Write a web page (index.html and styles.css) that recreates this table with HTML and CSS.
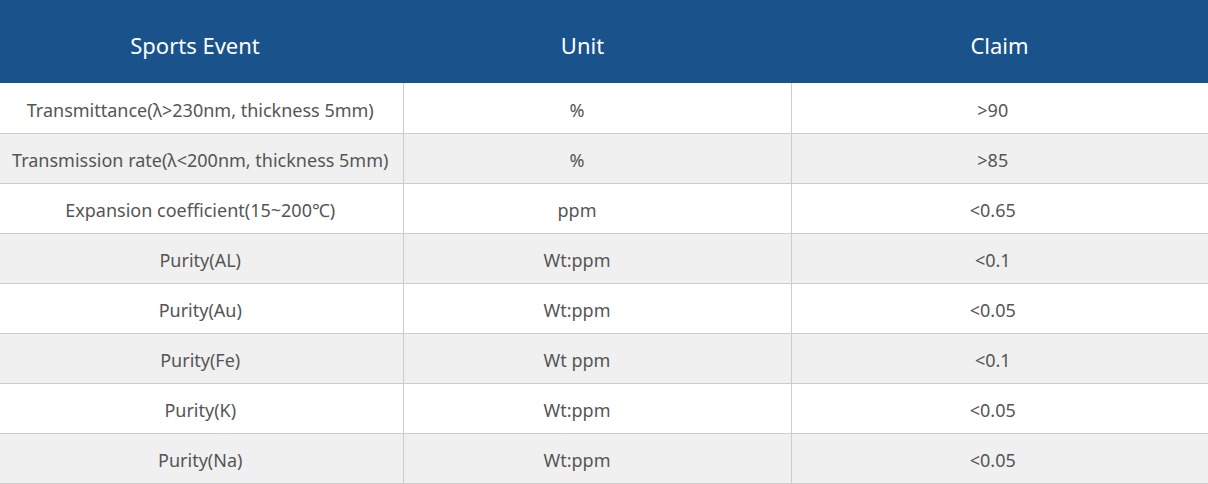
FILE: index.html
```html
<!DOCTYPE html>
<html lang="en">
<head>
<meta charset="utf-8">
<title>Specs</title>
<link rel="stylesheet" href="styles.css">
</head>
<body>
<table class="spec">
  <colgroup>
    <col class="c1"><col class="c2"><col class="c3">
  </colgroup>
  <thead>
    <tr><th class="h1">Sports Event</th><th class="h2">Unit</th><th class="h3">Claim</th></tr>
  </thead>
  <tbody>
    <tr class="first"><td>Transmittance(λ&gt;230nm, thickness 5mm)</td><td>%</td><td>&gt;90</td></tr>
    <tr><td>Transmission rate(λ&lt;200nm, thickness 5mm)</td><td>%</td><td>&gt;85</td></tr>
    <tr><td>Expansion coefficient(15~200℃)</td><td>ppm</td><td>&lt;0.65</td></tr>
    <tr><td>Purity(AL)</td><td>Wt:ppm</td><td>&lt;0.1</td></tr>
    <tr><td>Purity(Au)</td><td>Wt:ppm</td><td>&lt;0.05</td></tr>
    <tr><td>Purity(Fe)</td><td>Wt ppm</td><td>&lt;0.1</td></tr>
    <tr><td>Purity(K)</td><td>Wt:ppm</td><td>&lt;0.05</td></tr>
    <tr><td>Purity(Na)</td><td>Wt:ppm</td><td>&lt;0.05</td></tr>
  </tbody>
</table>
</body>
</html>
```
FILE: styles.css
```css
html, body {
  margin: 0;
  padding: 0;
  background: #fff;
}
body {
  font-family: "Noto Sans", "Open Sans", sans-serif;
  color: #555;
}
.spec {
  width: 1208px;
  border-collapse: collapse;
  table-layout: fixed;
}
.c1 { width: 403px; }
.c2 { width: 388px; }
.c3 { width: 417px; }
.spec th {
  background: #1a538c;
  color: #fff;
  font-weight: normal;
  font-size: 22px;
  height: 77px;
  padding: 6px 0 0;
  text-align: center;
  vertical-align: middle;
  white-space: nowrap;
}
.spec th.h1 { padding-right: 13px; }
.spec th.h2 { padding-right: 29px; }
.spec th.h3 { padding-right: 0; }
.spec td {
  height: 46px;
  padding: 3px 0 0;
  font-size: 18px;
  text-align: center;
  vertical-align: middle;
  white-space: nowrap;
  border-bottom: 1px solid #ccc;
  border-left: 1px solid #ccc;
}
.spec tr.first td {
  height: 47px;
}
.spec td:nth-child(1) {
  border-left: none;
  padding-right: 2px;
}
.spec td:nth-child(2) { padding-right: 40px; }
.spec td:nth-child(3) { padding-right: 14px; }
.spec tbody tr:nth-child(even) td {
  background: #f0f0f0;
}
```
